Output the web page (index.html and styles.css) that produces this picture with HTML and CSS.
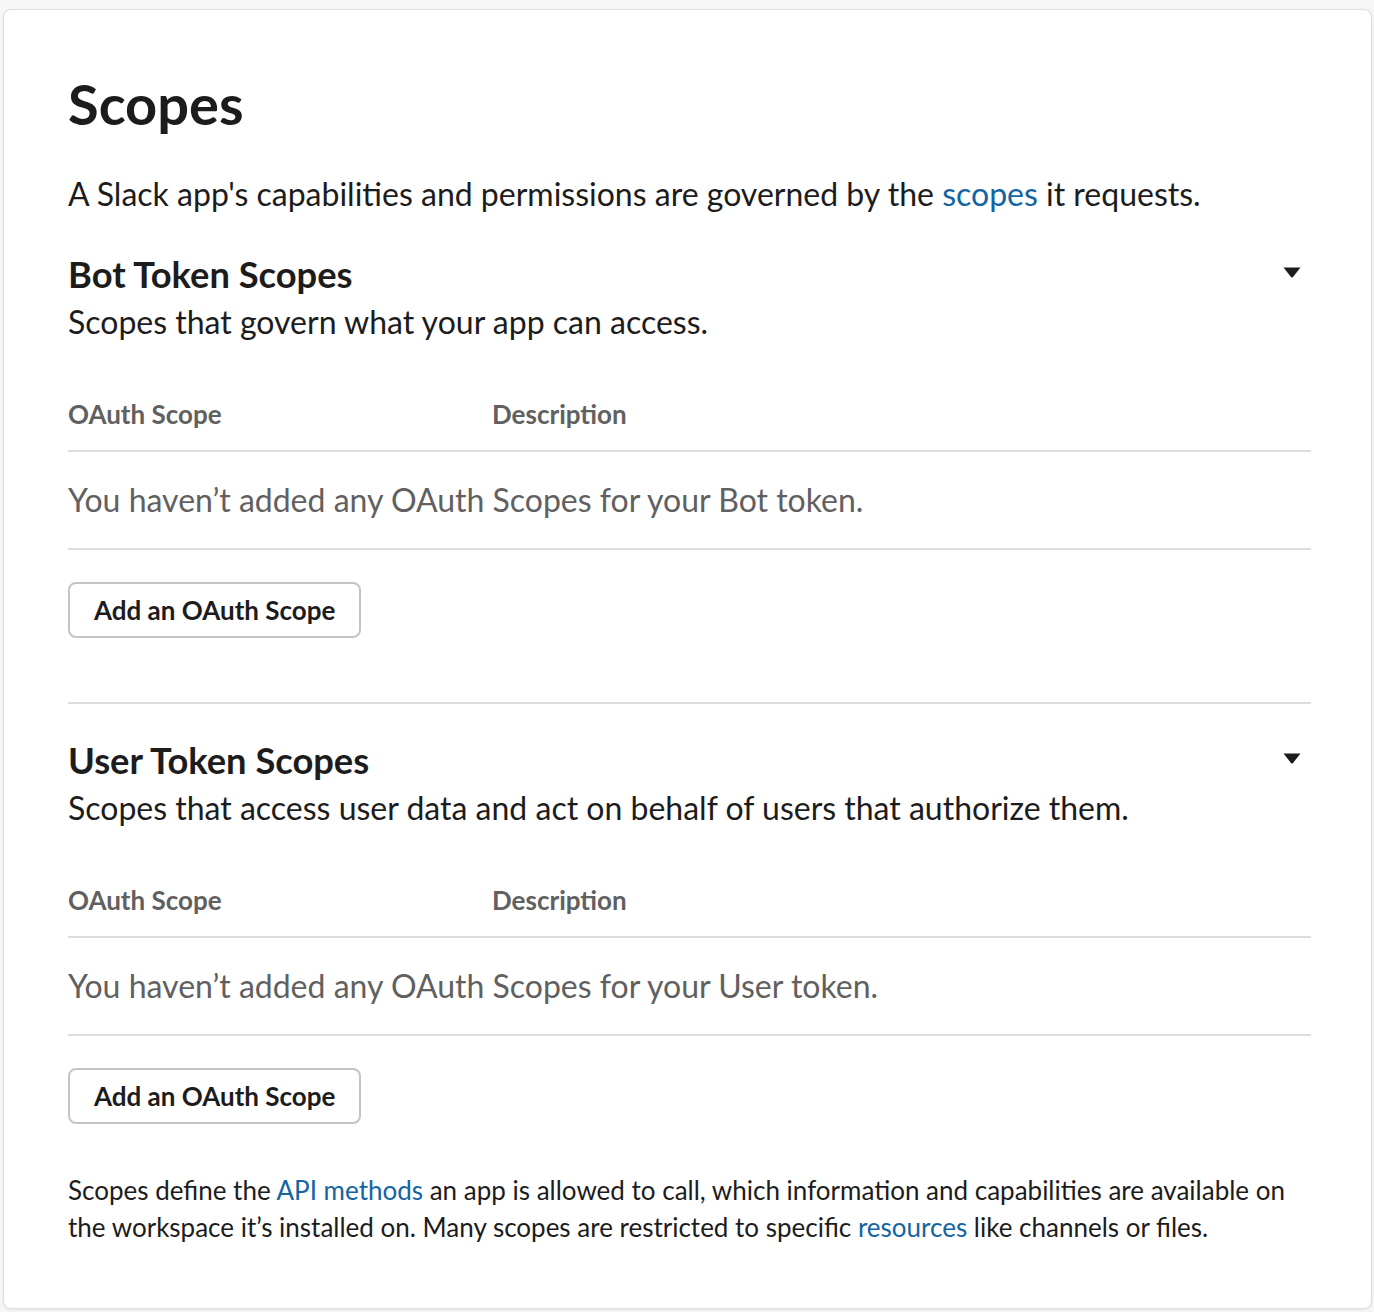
FILE: index.html
```html
<!DOCTYPE html>
<html lang="en">
<head>
<meta charset="utf-8">
<title>Scopes</title>
<link rel="stylesheet" href="styles.css">
</head>
<body>
<div class="card">
  <h1 class="title">Scopes</h1>
  <p class="intro">A Slack app's capabilities and permissions are governed by the <a class="link" href="#">scopes</a> it requests.</p>

  <section class="scope-section">
    <div class="section-head">
      <div class="section-text">
        <h2 class="section-title">Bot Token Scopes</h2>
        <p class="section-sub">Scopes that govern what your app can access.</p>
      </div>
      <svg class="caret" width="18" height="11" viewBox="0 0 18 11"><path d="M0.5 0.5 H17.5 L10 10 Q9 11 8 10 Z" fill="#1d1c1d"/></svg>
    </div>
    <div class="scope-table">
      <div class="table-head">
        <span>OAuth Scope</span>
        <span>Description</span>
      </div>
      <div class="table-empty">You haven’t added any OAuth Scopes for your Bot token.</div>
    </div>
    <button class="btn" type="button">Add an OAuth Scope</button>
  </section>

  <section class="scope-section second">
    <div class="section-head">
      <div class="section-text">
        <h2 class="section-title">User Token Scopes</h2>
        <p class="section-sub">Scopes that access user data and act on behalf of users that authorize them.</p>
      </div>
      <svg class="caret" width="18" height="11" viewBox="0 0 18 11"><path d="M0.5 0.5 H17.5 L10 10 Q9 11 8 10 Z" fill="#1d1c1d"/></svg>
    </div>
    <div class="scope-table">
      <div class="table-head">
        <span>OAuth Scope</span>
        <span>Description</span>
      </div>
      <div class="table-empty">You haven’t added any OAuth Scopes for your User token.</div>
    </div>
    <button class="btn" type="button">Add an OAuth Scope</button>
  </section>

  <p class="footnote">Scopes define the <a class="link" href="#">API methods</a> an app is allowed to call, which information and capabilities are available on the workspace it’s installed on. Many scopes are restricted to specific <a class="link" href="#">resources</a> like channels or files.</p>
</div>
</body>
</html>
```
FILE: styles.css
```css
* { box-sizing: border-box; }
html, body {
  margin: 0;
  background: #f6f6f6;
}
body {
  padding: 9px 2px 3px 3px;
  font-family: Lato, "Noto Sans", sans-serif;
  color: #1d1c1d;
}
.card {
  background: #fff;
  border: 1px solid #dedede;
  border-radius: 8px;
  box-shadow: 0 1px 3px rgba(0,0,0,0.08);
  padding: 62px 60px 62px 64px;
}
.title {
  margin: 0 0 35px;
  font-size: 56px;
  font-weight: 700;
  line-height: 64px;
}
.intro {
  margin: 0;
  font-size: 32px;
  line-height: 45px;
}
.link {
  color: #1264a3;
  text-decoration: none;
}
.scope-section {
  margin-top: 38px;
}
.scope-section.second {
  margin-top: 64px;
  border-top: 2px solid #dddddd;
  padding-top: 36px;
}
.section-head {
  display: flex;
  justify-content: space-between;
  align-items: flex-start;
}
.section-title {
  margin: 0;
  font-size: 36.3px;
  font-weight: 700;
  line-height: 41px;
}
.section-sub {
  margin: 4px 0 0;
  font-size: 32px;
  line-height: 45px;
}
.caret {
  margin-top: 13px;
  margin-right: 10px;
  flex: none;
}
.scope-table {
  margin-top: 51px;
}
.table-head {
  display: grid;
  grid-template-columns: 424px 1fr;
  font-size: 26px;
  font-weight: 700;
  line-height: 39px;
  color: #616061;
  padding-bottom: 16px;
  border-bottom: 2px solid #dddddd;
}
.table-empty {
  font-size: 32px;
  line-height: 45px;
  color: #616061;
  padding: 25px 0 26px;
  border-bottom: 2px solid #dddddd;
}
.btn {
  display: block;
  margin-top: 32px;
  height: 56px;
  padding: 0 24px;
  background: #fff;
  border: 2px solid #c4c4c4;
  border-radius: 8px;
  font-family: Lato, "Noto Sans", sans-serif;
  font-size: 26px;
  font-weight: 700;
  color: #1d1c1d;
}
.footnote {
  margin: 48px 0 0;
  font-size: 26px;
  line-height: 37px;
}
```
